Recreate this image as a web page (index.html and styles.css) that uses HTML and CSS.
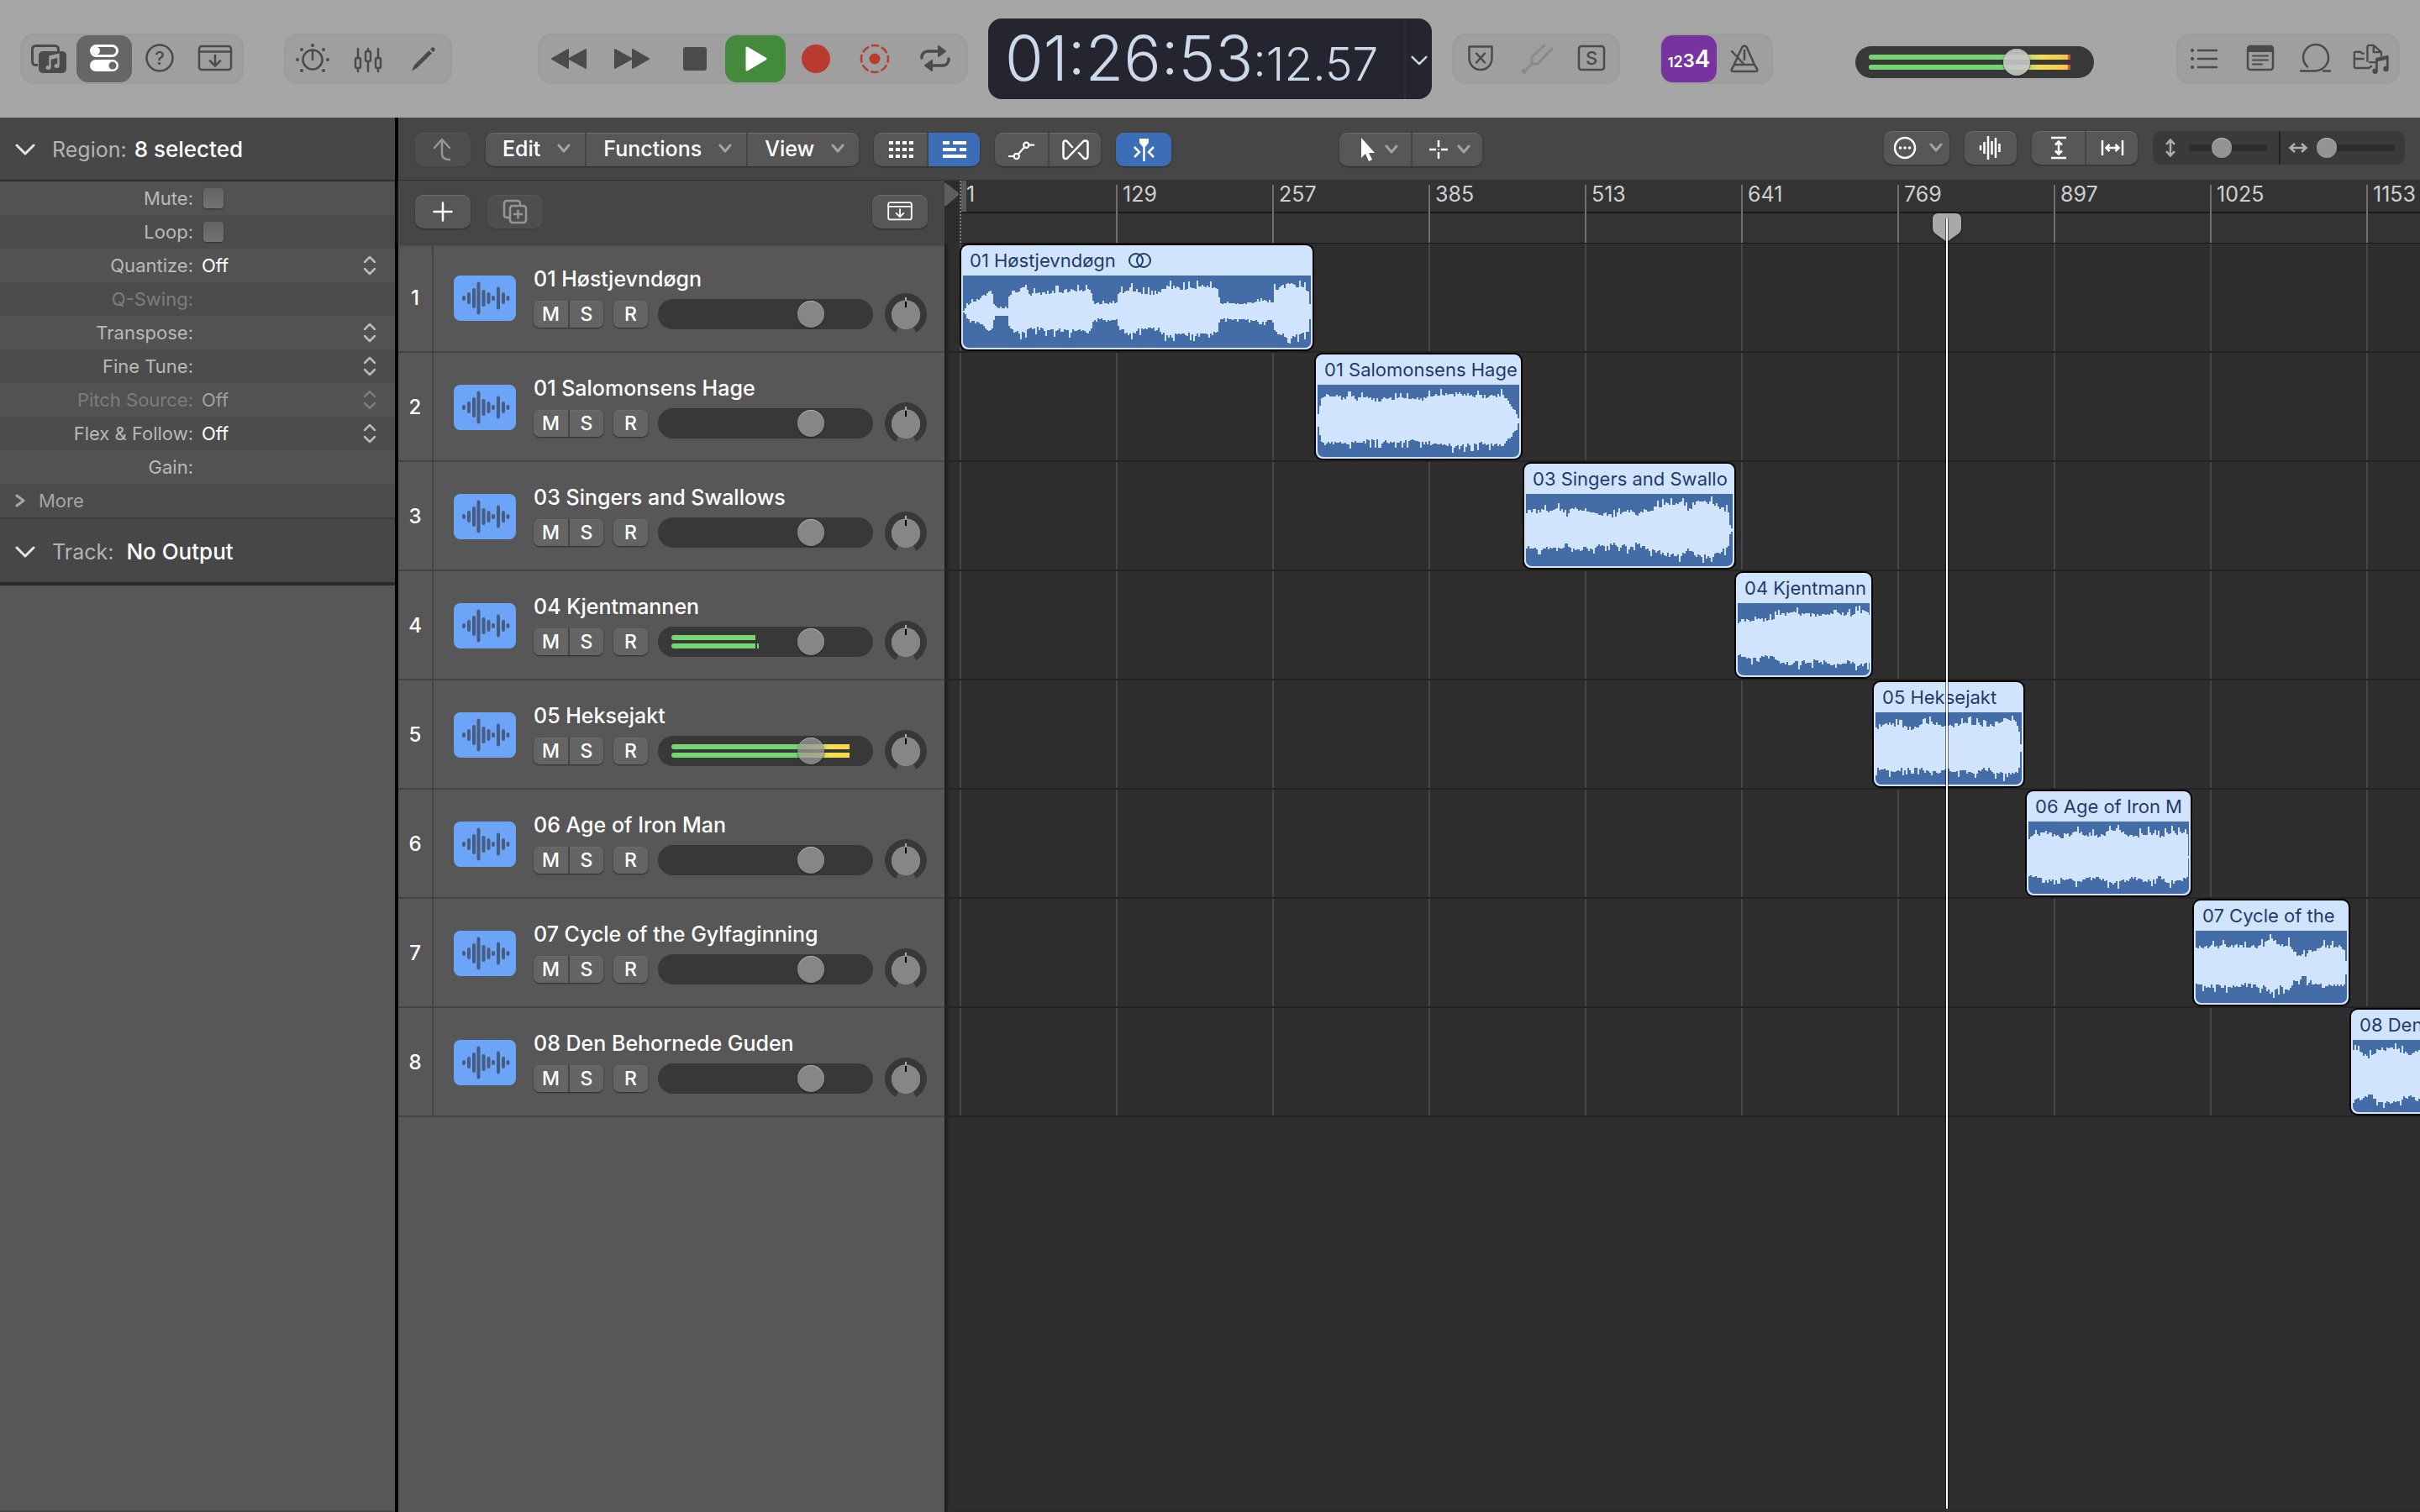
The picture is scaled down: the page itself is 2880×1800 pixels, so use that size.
FILE: index.html
```html
<!DOCTYPE html>
<html lang="en">
<head>
  <meta charset="UTF-8">
  <title>Tracks</title>
  <link rel="stylesheet" href="styles.css">
</head>
<body>
  <!-- Shared icons -->
  <svg class="sprite" aria-hidden="true">
    <symbol id="chevron" viewBox="0 0 16 12"><path d="M2 2l6 7 6-7" fill="none" stroke="currentColor" stroke-width="3" stroke-linecap="round" stroke-linejoin="round"/></symbol>
    <symbol id="disclosure" viewBox="0 0 24 14"><path d="M2 2l10 10L22 2" fill="none" stroke="currentColor" stroke-width="3" stroke-linecap="round" stroke-linejoin="round"/></symbol>
    <symbol id="tray" viewBox="0 0 44 44">
      <g fill="none" stroke="currentColor" stroke-width="2.5" stroke-linecap="round" stroke-linejoin="round">
        <rect x="3" y="7" width="38" height="28" rx="3"/><path d="M3 13.5h38M22 18v12M16 24.500l6 6 6-6"/>
      </g>
    </symbol>
    <symbol id="wave" viewBox="0 0 74 54">
      <path d="M12 26v2M18 22v10M24 17v20M29.500 9.500v35M35.500 19v16M41.500 22v10M47 26v2M53 15.500v23M59 22v10M64.500 26v2" stroke="currentColor" stroke-width="4" stroke-linecap="round"/>
    </symbol>
    <symbol id="stepper" viewBox="0 0 16 24"><path d="M2 8l6-6 6 6M2 16l6 6 6-6" fill="none" stroke="currentColor" stroke-width="2.500" stroke-linecap="round" stroke-linejoin="round"/></symbol>
  </svg>

  <!-- Control bar -->
  <header class="control-bar">
    <div class="group">
      <button aria-label="Library"><svg viewBox="0 0 44 44">
        <path d="M9 29.500H6.500a4 4 0 0 1-4-4V10.500a4 4 0 0 1 4-4h23a4 4 0 0 1 4 4V13" fill="none" stroke="currentColor" stroke-width="3"/>
        <rect x="10" y="13" width="33" height="26" rx="5" fill="currentColor"/>
        <path d="M23.500 32V19.500l10-2.500v13" fill="none" stroke="#a0a0a0" stroke-width="2.500"/><path d="M23.500 21.500l10-2.500" stroke="#a0a0a0" stroke-width="3"/>
        <ellipse cx="21.500" cy="32.500" rx="3" ry="2.500" fill="#a0a0a0"/><ellipse cx="31.500" cy="30.500" rx="3" ry="2.500" fill="#a0a0a0"/>
      </svg></button>
      <button class="on" aria-label="Inspector"><svg viewBox="0 0 44 44">
        <rect x="6.500" y="6.500" width="31" height="12" rx="6" fill="none" stroke="currentColor" stroke-width="3"/><circle cx="12.500" cy="12.500" r="4.500" fill="currentColor"/>
        <rect x="5" y="23" width="34" height="14" rx="7" fill="currentColor"/><circle cx="32" cy="30" r="4.500" fill="#666"/>
      </svg></button>
      <button aria-label="Quick help"><svg viewBox="0 0 44 44"><circle cx="22" cy="21" r="15.500" fill="none" stroke="currentColor" stroke-width="2.500"/><text class="glyph" x="22" y="29">?</text></svg></button>
      <button aria-label="Toolbar"><svg><use href="#tray"/></svg></button>
    </div>
    <div class="group">
      <button aria-label="Smart controls"><svg viewBox="0 0 44 44">
        <circle cx="22" cy="23" r="11.500" fill="none" stroke="currentColor" stroke-width="2.500"/><path d="M22 12v12" stroke="currentColor" stroke-width="2.500"/>
        <g fill="currentColor"><circle cx="22" cy="6" r="2"/><circle cx="9" cy="11" r="2"/><circle cx="35" cy="11" r="2"/><circle cx="4" cy="23" r="2"/><circle cx="40" cy="23" r="2"/><circle cx="9" cy="36" r="2"/><circle cx="35" cy="36" r="2"/></g>
      </svg></button>
      <button aria-label="Mixer"><svg viewBox="0 0 44 44"><g fill="none" stroke="currentColor" stroke-width="2.500" stroke-linecap="round">
        <path d="M10 10v11M10 33v4M22 10v3M22 25v12M34 10v11M34 33v4"/><rect x="7" y="21" width="6" height="12" rx="2"/><rect x="19" y="13" width="6" height="12" rx="2"/><rect x="31" y="21" width="6" height="12" rx="2"/>
      </g></svg></button>
      <button aria-label="Editors"><svg viewBox="0 0 44 44"><path d="M8 36.500l3-7L28.500 12l3.500 3.500L14 33zM30 10.500l1.500-1.500c2-2 5.500 1 3.500 3.500L33.500 14z" fill="currentColor"/></svg></button>
    </div>
    <div class="group transport">
      <button aria-label="Rewind"><svg viewBox="0 0 48 44"><path d="M23 10v24L2 22zM46 10v24L24 22z" fill="currentColor" stroke="currentColor" stroke-width="2" stroke-linejoin="round"/></svg></button>
      <button class="forward" aria-label="Forward"><svg viewBox="0 0 48 44"><path d="M2 10v24l22-12zM25 10v24l21-12z" fill="currentColor" stroke="currentColor" stroke-width="2" stroke-linejoin="round"/></svg></button>
      <button aria-label="Stop"><svg viewBox="0 0 44 44"><rect x="8" y="8" width="28" height="28" rx="3" fill="currentColor"/></svg></button>
      <button class="play" aria-label="Play"><svg viewBox="0 0 44 44"><path d="M12 9v26l22-13z" fill="currentColor" stroke="currentColor" stroke-width="3" stroke-linejoin="round"/></svg></button>
      <button class="rec" aria-label="Record"><svg viewBox="0 0 44 44"><circle cx="22" cy="22" r="17" fill="currentColor"/></svg></button>
      <button class="rec" aria-label="Capture recording"><svg viewBox="0 0 44 44"><circle cx="20" cy="22" r="16" fill="none" stroke="currentColor" stroke-width="2.500" stroke-dasharray="9.570 3" stroke-dashoffset="4.800"/><circle cx="20" cy="22" r="6.500" fill="currentColor"/></svg></button>
      <button aria-label="Cycle"><svg viewBox="0 0 44 44"><path d="M4 21v-1a7 7 0 0 1 7-7h16M36 22v1a7 7 0 0 1-7 7H15" fill="none" stroke="currentColor" stroke-width="3.500" stroke-linecap="round"/><path d="M24 7l8 6-8 6zM16 24l-8 6 8 6z" fill="currentColor" stroke="currentColor" stroke-width="2" stroke-linejoin="round"/></svg></button>
    </div>
    <div class="lcd">
      <div class="time">01:26:53<small>:12.57</small></div>
      <button aria-label="Display mode"><svg class="lcd-chevron"><use href="#disclosure"/></svg></button>
    </div>
    <div class="group">
      <button aria-label="Replace"><svg viewBox="0 0 44 44"><path d="M8.500 7.500h27v14a13.500 13.500 0 0 1-27 0z" fill="none" stroke="currentColor" stroke-width="2.500" stroke-linejoin="round"/><path d="M17 15.500l10 11M27 15.500l-10 11" stroke="currentColor" stroke-width="2.500" stroke-linecap="round"/></svg></button>
      <button class="dim" aria-label="Tuner"><svg viewBox="0 0 44 44"><path d="M8 37l9-9v-8L32 6M17 28h7l17-18" fill="none" stroke="currentColor" stroke-width="3" stroke-linecap="round" stroke-linejoin="round"/><circle cx="8" cy="37" r="3" fill="currentColor"/></svg></button>
      <button aria-label="Solo"><svg viewBox="0 0 44 44"><rect x="7" y="7" width="30" height="28" rx="3" fill="none" stroke="currentColor" stroke-width="2.500"/><text class="glyph" x="22" y="29">S</text></svg></button>
    </div>
    <div class="group">
      <button class="count" aria-label="Count in"><span class="c1">1</span><span class="c2">2</span><span class="c3">3</span><span class="c4">4</span></button>
      <button aria-label="Metronome"><svg viewBox="0 0 44 44"><g fill="none" stroke="currentColor" stroke-width="2.500" stroke-linecap="round" stroke-linejoin="round"><path d="M14 19l5-10c1-3 5-3 6 0l9 20 3 5c1 2 0 3-2 3H9c-2 0-3-1-2-3l3-5h22M22 12v11M7 13l14 15M13 22l-3 6"/></g></svg></button>
    </div>
    <div class="fader master">
      <i class="meter" style="width: 240px"></i><i class="meter" style="width: 240px"></i>
      <input type="range" min="0" max="100" value="70" aria-label="Master volume">
    </div>
    <div class="group views">
      <button aria-label="List editors"><svg viewBox="0 0 44 44"><path d="M14 12h22M14 22h22M14 32h22" stroke="currentColor" stroke-width="2.500" stroke-linecap="round"/><path d="M7 12h.1M7 22h.1M7 32h.1" stroke="currentColor" stroke-width="4" stroke-linecap="round"/></svg></button>
      <button aria-label="Note pads"><svg viewBox="0 0 44 44"><rect x="7" y="7" width="30" height="28" rx="3" fill="none" stroke="currentColor" stroke-width="2.500"/><path d="M7 7h30v7H7z" fill="currentColor"/><path d="M13 18.500h18M13 23.500h18M13 28.500h11" stroke="currentColor" stroke-width="2" stroke-linecap="round"/></svg></button>
      <button aria-label="Loops"><svg viewBox="0 0 44 44"><path d="M4 36.500h15c11 0 18-7 18-16a15 15.500 0 1 0-30 0c0 5 2 8 5 11M31 36.500h8" fill="none" stroke="currentColor" stroke-width="2.500" stroke-linecap="round"/></svg></button>
      <button aria-label="Browsers"><svg viewBox="0 0 48 44"><g fill="none" stroke="currentColor" stroke-width="2.500" stroke-linejoin="round"><path d="M15 15h-3l-2-2H3.500a1.500 1.500 0 0 0-1.500 1.500V32c0 1 1 2 2 2h17l4-3M2 22h13M19 26V7c0-1.500 1-2.500 2.500-2.500H27l10 9V19M27 5v8.500h9M32 26.500h-11"/><path d="M31 38V22l14-3v16" stroke-width="3"/><path d="M31 23.500l14-3" stroke-width="4"/></g><circle cx="29" cy="38" r="3.500" fill="currentColor"/><circle cx="43" cy="35" r="3.500" fill="currentColor"/></svg></button>
    </div>
  </header>

  <div class="workspace">
    <!-- Inspector -->
    <aside class="inspector">
      <h2><svg><use href="#disclosure"/></svg>Region: <b>8 selected</b></h2>
      <div class="params">
        <div class="param"><label for="mute">Mute:</label><input type="checkbox" id="mute"></div>
        <div class="param"><label for="loop">Loop:</label><input type="checkbox" id="loop"></div>
        <div class="param"><label for="quantize">Quantize:</label><select id="quantize"><option>Off</option></select><svg><use href="#stepper"/></svg></div>
        <div class="param off"><label for="swing">Q-Swing:</label><input type="text" id="swing" disabled></div>
        <div class="param"><label for="transpose">Transpose:</label><select id="transpose"><option></option></select><svg><use href="#stepper"/></svg></div>
        <div class="param"><label for="fine">Fine Tune:</label><select id="fine"><option></option></select><svg><use href="#stepper"/></svg></div>
        <div class="param off"><label for="pitch">Pitch Source:</label><select id="pitch" disabled><option>Off</option></select><svg><use href="#stepper"/></svg></div>
        <div class="param"><label for="flex">Flex &amp; Follow:</label><select id="flex"><option>Off</option></select><svg><use href="#stepper"/></svg></div>
        <div class="param"><label for="gain">Gain:</label><input type="text" id="gain"></div>
        <button class="more"><svg viewBox="0 0 12 16"><path d="M2 2l8 6-8 6" fill="none" stroke="currentColor" stroke-width="3" stroke-linecap="round" stroke-linejoin="round"/></svg>More</button>
      </div>
      <h2 class="track-title"><svg><use href="#disclosure"/></svg>Track: <b>No Output</b></h2>
    </aside>

    <main class="tracks-area">
      <div class="menu-bar">
        <div class="pill faint"><button aria-label="Up"><svg viewBox="0 0 32 32"><path d="M6 14L15 4l9 10M15 5v16c0 5 3 7 9 7" fill="none" stroke="currentColor" stroke-width="2.500" stroke-linecap="round" stroke-linejoin="round"/></svg></button></div>
        <div class="pill menus">
          <button>Edit<svg><use href="#chevron"/></svg></button>
          <button>Functions<svg><use href="#chevron"/></svg></button>
          <button>View<svg><use href="#chevron"/></svg></button>
        </div>
        <div class="pill">
          <button aria-label="Grid"><svg viewBox="0 0 32 32"><path d="M2 8h29M2 16h29M2 24h29" stroke="currentColor" stroke-width="4" stroke-dasharray="5 3"/></svg></button>
          <button class="active" aria-label="Tracks"><svg viewBox="0 0 32 32"><path d="M2 8h8M14 8h16M2 16h16M22 16h8M2 24h28" stroke="currentColor" stroke-width="4"/></svg></button>
        </div>
        <div class="pill">
          <button aria-label="Automation"><svg viewBox="0 0 36 32"><g fill="none" stroke="currentColor" stroke-width="2.500" stroke-linecap="round"><circle cx="11" cy="25" r="3.500"/><circle cx="24" cy="10" r="3.500"/><path d="M1 25h6M13.500 22L21.500 13M28 10h6"/></g></svg></button>
          <button aria-label="Flex"><svg viewBox="0 0 32 32"><path d="M12 13L6 6.500C4 4.500 1.500 5.500 1.500 8v16c0 3 3 4 5 2L25 6.500c2-2 5.500-1 5.500 1.500v16c0 3-3 4-5 2L20 20" fill="none" stroke="currentColor" stroke-width="2.500" stroke-linecap="round"/></svg></button>
        </div>
        <div class="pill"><button class="active" aria-label="Catch playhead"><svg viewBox="0 0 32 32"><path d="M11 3h11v5l-4 5h-3l-4-5z" fill="currentColor"/><path d="M16.500 8v22M5 13l6 6-6 6M28 13l-6 6 6 6" fill="none" stroke="currentColor" stroke-width="2.500"/></svg></button></div>
        <div class="pill tools">
          <button aria-label="Pointer tool"><svg class="tool" viewBox="0 0 32 32"><path d="M10 2v24l5-5 4 9 4-2-4-8h7z" fill="currentColor"/></svg><svg><use href="#chevron"/></svg></button>
          <button aria-label="Marquee tool"><svg class="tool" viewBox="0 0 32 32"><path d="M16 5v8M16 19v8M5 16h8M19 16h8M16 15.500v1" stroke="currentColor" stroke-width="2.500"/></svg><svg><use href="#chevron"/></svg></button>
        </div>
        <div class="zoom-tools">
          <div class="pill options"><button aria-label="Options"><svg class="tool" viewBox="0 0 32 32"><circle cx="16" cy="16" r="12" fill="none" stroke="currentColor" stroke-width="2.500"/><path d="M10.500 16h.1M16 16h.1M21.500 16h.1" stroke="currentColor" stroke-width="3.500" stroke-linecap="round"/></svg><svg><use href="#chevron"/></svg></button></div>
          <div class="pill"><button aria-label="Waveform zoom"><svg viewBox="0 0 32 32"><path d="M4 13v6M8.500 9v14M13 2v28M17.500 8v16M22 4v24M26.500 11v10" stroke="currentColor" stroke-width="2.500"/></svg></button></div>
          <div class="pill">
            <button aria-label="Fit height"><svg viewBox="0 0 32 32"><path d="M7 4h18M7 28h18M16 9v14M12 12.500l4-4 4 4M12 19.500l4 4 4-4" fill="none" stroke="currentColor" stroke-width="2.500"/></svg></button>
            <button aria-label="Fit width"><svg viewBox="0 0 32 32"><path d="M4 7v18M28 7v18M9 16h14M12.500 12l-4 4 4 4M19.500 12l4 4-4 4" fill="none" stroke="currentColor" stroke-width="2.500"/></svg></button>
          </div>
          <div class="zoom-sliders">
            <label><svg viewBox="0 0 24 24"><path d="M12 3v18M7 8l5-5.500L17 8M7 16l5 5.500 5-5.500" fill="none" stroke="currentColor" stroke-width="2.500"/></svg><input type="range" min="0" max="100" value="39" aria-label="Vertical zoom"></label>
            <label><svg viewBox="0 0 24 24"><path d="M3 12h18M8 7l-5.500 5L8 17M16 7l5.500 5-5.500 5" fill="none" stroke="currentColor" stroke-width="2.500"/></svg><input type="range" min="0" max="100" value="0" aria-label="Horizontal zoom"></label>
          </div>
        </div>
      </div>

      <div class="arrange">
        <section class="headers">
          <div class="header-bar">
            <div class="pill"><button aria-label="Add track"><svg viewBox="0 0 32 32"><path d="M16 5.500v21M5.500 16h21" stroke="currentColor" stroke-width="2.500" stroke-linecap="round"/></svg></button></div>
            <div class="pill faint"><button aria-label="Duplicate track"><svg viewBox="0 0 32 32"><path d="M9 23H6a3 3 0 0 1-3-3V6a3 3 0 0 1 3-3h13a3 3 0 0 1 3 3v2" fill="none" stroke="currentColor" stroke-width="2.500"/><rect x="10" y="9" width="19" height="20" rx="3" fill="none" stroke="currentColor" stroke-width="2.500"/><path d="M19.500 13.500v11M14 19h11" stroke="currentColor" stroke-width="2.500"/></svg></button></div>
            <div class="pill header-config"><button aria-label="Track header settings"><svg><use href="#tray"/></svg></button></div>
          </div>
          <div id="trackList"></div>
        </section>

        <section class="timeline">
          <div class="ruler">
            <svg class="start" viewBox="0 0 26 75"><path d="M0 0h18v75H0z" fill="#2c2c2c"/><path d="M0 3h2l14 11q2 2 0 4L2 30H0z" fill="#5e5e5e"/><path d="M20 0h6v37h-6z" fill="#5a5a5a"/><path d="M19 0v75" stroke="#7c7c7c" stroke-width="2" stroke-dasharray="2 2"/></svg>
            <div class="ticks" id="ticks"></div>
          </div>
          <div class="lanes" id="lanes"></div>
          <div class="playhead"><svg viewBox="0 0 34 34"><path d="M0 6a6 6 0 0 1 6-6h22a6 6 0 0 1 6 6v11c0 3-1 5-3 7L17 34 3 24c-2-2-3-4-3-7z" fill="#a9a9a9"/></svg></div>
        </section>
      </div>
    </main>
  </div>

  <script src="script.js"></script>
</body>
</html>
```
FILE: styles.css
```css
/* Global Settings */
* { margin: 0; padding: 0; box-sizing: border-box; }
body {
  display: flex;
  flex-direction: column;
  min-height: 100vh;
  background: #2e2e2e;
  font-family: Inter, "Liberation Sans", sans-serif;
  font-size: 24px;
  color: #fff;
  overflow: hidden;
}
button, input, select {
  font: inherit;
  color: inherit;
  background: none;
  border: none;
  appearance: none;
}
button { cursor: pointer; }
.sprite { display: none; }

/* ----------------- Control bar ----------------- */
.control-bar {
  display: flex;
  align-items: center;
  height: 140px;
  padding: 0 24px;
  background: #a6a6a6;
  color: #4b4b4b;
}
.group {
  display: flex;
  align-items: center;
  height: 60px;
  padding: 0 1px;
  margin-right: 48px;
  border-radius: 16px;
  background: #9f9f9f;
  box-shadow: inset 0 0 4px #999;
}
.group button {
  display: flex;
  align-items: center;
  justify-content: center;
  width: 66px;
  height: 56px;
  border-radius: 14px;
}
.group svg { width: 44px; height: 44px; }
.glyph {
  font-size: 22px;
  font-weight: 500;
  text-anchor: middle;
  fill: currentColor;
}
.group .on { background: #666; color: #fff; }
.group .dim { color: #8a8a8a; }
.transport { margin: 0 24px 0 54px; }
.transport button { width: 72px; }
.transport .forward { width: 78px; }
.transport .play { background: #438a3c; color: #fff; }
.transport .rec { color: #b93a2f; }
.group .count {
  align-items: baseline;
  width: 66px;
  line-height: 56px;
  background: #77349f;
  color: #fff;
  font-weight: 600;
}
.c1 { font-size: 16px; }
.c2 { font-size: 18px; }
.c3 { font-size: 22px; }
.c4 { font-size: 28px; }
.views { margin: 0 0 0 auto; }

/* Time display */
.lcd {
  display: flex;
  width: 528px;
  height: 96px;
  margin-right: 24px;
  border-radius: 16px;
  background: #24252e;
  color: #cbd9ea;
}
.time {
  flex: 1;
  padding-left: 20px;
  font-size: 74px;
  font-weight: 300;
  line-height: 94px;
  white-space: nowrap;
}
.time small { font-size: 55px; }
.lcd button {
  width: 33px;
  border-left: 2px solid #2e2f39;
}
.lcd-chevron { width: 20px; height: 14px; }

/* ----------------- Faders ----------------- */
.fader {
  position: relative;
  display: flex;
  flex-direction: column;
  justify-content: center;
  gap: 4px;
  width: 256px;
  height: 36px;
  padding-left: 16px;
  border-radius: 18px;
  background: #383838;
}
.meter {
  height: 6px;
  border-radius: 3px 0 0 3px;
  background: linear-gradient(90deg, #76d672 150px, #fade4e 190px, #f6c944 240px);
}
.fader input {
  position: absolute;
  inset: 0;
  width: 100%;
}
.fader input::-webkit-slider-thumb {
  appearance: none;
  width: 32px;
  height: 32px;
  border-radius: 50%;
  background: #868686;
  box-shadow: inset 0 1px 0 #a8a8a8, 0 1px 2px #222;
}
.fader.live input::-webkit-slider-thumb { background: rgba(155, 155, 155, 0.75); }
.fader .peak {
  position: absolute;
  left: 118px;
  top: 20px;
  width: 2px;
  height: 6px;
  background: #76d672;
}
.master {
  gap: 6px;
  width: 284px;
  height: 38px;
  margin: 8px 0 0 50px;
  border-radius: 19px;
}
.master .meter {
  background: linear-gradient(90deg, #76d672 170px, #f4de54 205px, #f6c444 237px, #d9513b 237px);
}
.master input::-webkit-slider-thumb { background: rgba(200, 200, 200, 0.9); }

/* ----------------- Workspace ----------------- */
.workspace {
  flex: 1;
  display: grid;
  grid-template-columns: 474px 1fr;
}
.inspector {
  border-right: 4px solid #000;
  background: linear-gradient(#484848, #484848) bottom / 100% 2px no-repeat #575757;
}
.inspector h2 {
  display: flex;
  align-items: center;
  height: 76px;
  padding: 2px 0 0 18px;
  border-bottom: 2px solid #2e2e2e;
  background: #474747;
  color: #b4b4b4;
  font-size: 25px;
  font-weight: 400;
  line-height: 30px;
}
.inspector h2 svg {
  width: 24px;
  height: 14px;
  margin-right: 20px;
  color: #e4e4e4;
}
.inspector h2 b {
  margin-left: 9px;
  color: #fff;
  font-size: 26px;
  font-weight: 500;
}
.inspector .track-title {
  height: 81px;
  border-top: 2px solid #3a3a3a;
  border-bottom: 4px solid #2a2a2a;
}
.track-title b { padding-left: 6px; }

.params {
  display: grid;
  grid-auto-rows: 40px;
  font-size: 22px;
}
.param, .more {
  display: flex;
  align-items: center;
  gap: 10px;
  padding-right: 22px;
  background: #525252;
  color: #b9b9b9;
  line-height: 30px;
}
.param:nth-child(even), .more { background: #4c4c4c; }
.param label {
  width: 230px;
  text-align: right;
}
.param select {
  flex: 1;
  color: #fff;
  opacity: 1;
}
.param input[type="text"] { width: 160px; }
.param input[type="checkbox"] {
  width: 24px;
  height: 24px;
  margin-left: 2px;
  border-radius: 4px;
  background: linear-gradient(#646464, #727272);
  box-shadow: 0 1px 2px #333;
}
.param svg { width: 16px; height: 24px; }
.param.off, .param.off svg { color: #7d7d7d; }
.param.off select { color: #a0a0a0; }
.more {
  gap: 16px;
  padding-left: 18px;
  color: #a6a6a6;
}
.more svg { width: 12px; height: 16px; }

/* ----------------- Menu bar ----------------- */
.tracks-area {
  display: flex;
  flex-direction: column;
  min-width: 0;
}
.menu-bar {
  display: flex;
  gap: 18px;
  height: 75px;
  padding: 18px 18px 0 20px;
  border-bottom: 1px solid #333;
  background: #464646;
}
.pill {
  display: flex;
  height: 40px;
  border-radius: 10px;
  background: #575757;
  box-shadow: 0 1px 2px #2c2c2c, inset 0 1px 0 #6c6c6c;
  overflow: hidden;
}
.pill button {
  display: flex;
  align-items: center;
  justify-content: center;
  width: 66px;
}
.pill button + button { border-left: 2px solid #454545; }
.pill button:not(:only-child) { width: 63px; }
.pill svg { width: 32px; height: 32px; }
.pill .active { background: #3c6db7; }
.pill.faint {
  background: #4e4e4e;
  box-shadow: 0 1px 1px #3e3e3e, inset 0 1px 0 #585858;
  color: #969696;
}
.menus { font-size: 25px; font-weight: 500; }
.pill.menus button {
  justify-content: space-between;
  width: auto;
  padding: 0 17px 2px 20px;
  gap: 20px;
}
.menus svg, .tools .tool + svg, .options .tool + svg {
  width: 16px;
  height: 12px;
  color: #a3a3a3;
}
.tools { margin-left: 182px; }
.pill.tools button { width: 85px; gap: 6px; }
.pill.options button { width: 78px; gap: 13px; }
.zoom-tools {
  display: flex;
  gap: 18px;
  margin: -2px 0 0 auto;
}
.zoom-tools .pill button:only-child:not(.options button) { width: 62px; }
.zoom-sliders {
  display: flex;
  height: 40px;
  border-radius: 10px;
  background: #3a3a3a;
}
.zoom-sliders label {
  display: flex;
  align-items: center;
  gap: 10px;
  width: 150px;
  padding-left: 9px;
  color: #b0b0b0;
}
.zoom-sliders label + label { border-left: 2px solid #222; }
.zoom-sliders svg { width: 24px; height: 24px; }
.zoom-sliders input {
  width: 93px;
  height: 8px;
  border-radius: 4px;
  background: #2c2c2c;
}
.zoom-sliders input::-webkit-slider-thumb {
  appearance: none;
  width: 24px;
  height: 24px;
  border-radius: 50%;
  background: #949494;
  box-shadow: inset 0 1px 0 #b4b4b4;
}

/* ----------------- Track headers ----------------- */
.arrange {
  flex: 1;
  display: grid;
  grid-template-columns: 650px 1fr;
}
.headers {
  background: #575757;
}
.header-bar {
  display: flex;
  gap: 20px;
  height: 75px;
  padding: 17px 20px 0;
  background: #464646;
  box-shadow: 0 1px 4px #333;
}
.header-config { margin-left: auto; }
.track {
  display: flex;
  align-items: center;
  height: 130px;
  border-bottom: 2px solid #444;
}
.number {
  align-self: stretch;
  width: 42px;
  border-right: 2px solid #464646;
  font-weight: 500;
  line-height: 130px;
  text-align: center;
}
.track-icon {
  width: 74px;
  height: 54px;
  margin: 2px 21px 0 24px;
  border-radius: 8px;
  background: #6ca4f8;
  color: #465c80;
}
.track-name {
  margin-bottom: 9px;
  font-size: 25px;
  font-weight: 500;
  line-height: 30px;
}
.strip {
  display: flex;
  align-items: center;
  height: 36px;
}
.strip .pill {
  height: 32px;
  margin-right: 12px;
  border-radius: 7px;
  background: #646464;
  font-size: 23px;
  font-weight: 500;
}
.strip .pill button { width: 41px; }
.strip .pill button + button { width: 42px; }
.knob { width: 50px; height: 50px; margin-left: 14px; }

/* ----------------- Timeline ----------------- */
.timeline {
  position: relative;
  min-width: 0;
  background: #2e2e2e;
  box-shadow: inset 4px 0 3px -1px #1c1c1c;
  overflow: hidden;
}
.ruler {
  position: relative;
  height: 75px;
  border-bottom: 1px solid #1c1c1c;
  background: linear-gradient(#333 37px, #1c1c1c 37px, #1c1c1c 39px, #333 39px);
}
.start {
  position: absolute;
  left: 0;
  top: 0;
  width: 26px;
  height: 75px;
}
.ticks {
  display: flex;
  height: 100%;
  padding: 5px 0 0 18px;
}
.ticks span {
  flex: none;
  width: 186px;
  padding-left: 6px;
  border-left: 2px solid #6f6f6f;
  color: #cfcfcf;
  font-size: 25px;
  line-height: 23px;
}
.ticks span:first-child { border-color: transparent; }
.lanes { background: repeating-linear-gradient(90deg, #464646 0 2px, transparent 2px 186px) 18px 0 no-repeat; }
.lane {
  height: 130px;
  padding-left: 18px;
  border-bottom: 2px solid #232323;
}
.region {
  height: 128px;
  padding: 0 2px 2px;
  border: 2px solid #000;
  border-radius: 10px;
  background: #d1e4fe;
  color: #1f3c6b;
  overflow: hidden;
}
.region h3 {
  display: flex;
  align-items: center;
  gap: 14px;
  height: 36px;
  padding-left: 8px;
  font-size: 22px;
  font-weight: 400;
  white-space: nowrap;
}
.region h3 svg { flex: none; width: 30px; height: 20px; }
.audio {
  display: block;
  width: 100%;
  height: 86px;
  border-radius: 0 0 7px 7px;
  background: #446ca6;
}

.playhead {
  position: absolute;
  left: 1176px;
  top: 39px;
  bottom: 4px;
  width: 34px;
}
.playhead svg { width: 34px; height: 34px; filter: drop-shadow(0 0 1px #000); }
.playhead::after {
  content: "";
  position: absolute;
  left: 15px;
  top: 6px;
  bottom: 0;
  box-sizing: border-box;
  width: 4px;
  border: 1px solid rgba(0, 0, 0, 0.5);
  border-width: 0 1px;
  background: #fff;
  background-clip: padding-box;
}
```
FILE: script.js
```javascript
/* ---------- Session data ---------- */
// start and length in pixels from bar 1; wave is a list of [position %, peak height]
const tracks = [
  { name: '01 Høstjevndøgn', clip: '01 Høstjevndøgn', start: 0, length: 422, stereo: true,
    wave: [[0,2],[1,8],[3,15],[6,19],[7.5,25],[8.5,20],[8.8,5],[12.7,6],[13.2,23],[17,29],[19.5,21],[24,24],[29,26],[36.5,26],[37.4,10],[44,11],[44.6,23],[48,29],[51,23],[56,24],[58.5,32],[63,29],[70,32],[73.2,27],[73.6,10],[81,10],[86.5,14],[88.7,10],[89.4,28],[94,34],[99.3,27],[99.6,4],[100,2]] },
  { name: '01 Salomonsens Hage', clip: '01 Salomonsens Hage', start: 422, length: 248,
    wave: [[0,9],[1,24],[4,31],[12,29],[30,27],[50,27],[58,31],[70,34],[80,30],[92,32],[95,23],[98,12],[99,3],[100,1]] },
  { name: '03 Singers and Swallows', clip: '03 Singers and Swallo', start: 670, length: 254,
    wave: [[0,23],[8,24],[17,26],[19,16],[22,26],[30,25],[42,18],[50,24],[53,17],[58,25],[66,31],[75,34],[78,25],[82,35],[90,34],[96,25],[98,22],[98.5,2],[100,1]] },
  { name: '04 Kjentmannen', clip: '04 Kjentmann', start: 922, length: 165, level: 100, peak: true,
    wave: [[0,22],[8,24],[15,28],[22,22],[32,30],[42,32],[60,29],[74,34],[84,30],[94,35],[100,30]] },
  { name: '05 Heksejakt', clip: '05 Heksejakt', start: 1086, length: 182, level: 212,
    wave: [[0,27],[10,30],[26,25],[38,33],[48,28],[66,32],[75,27],[88,35],[96,32],[97.5,28],[98.5,5],[100,4]] },
  { name: '06 Age of Iron Man', clip: '06 Age of Iron M', start: 1268, length: 199,
    wave: [[0,24],[10,31],[18,26],[30,31],[42,27],[54,34],[65,27],[75,31],[80,25],[88,32],[98.5,28],[99,2],[100,1]] },
  { name: '07 Cycle of the Gylfaginning', clip: '07 Cycle of the', start: 1467, length: 188,
    wave: [[0,24],[10,25],[28,27],[32,24],[44,27],[50,34],[56,26],[61,29],[65,18],[71,14],[77,22],[85,26],[98.5,24],[99,2],[100,1]] },
  { name: '08 Den Behornede Guden', clip: '08 Den Behornede', start: 1654, length: 200,
    wave: [[0,32],[6,28],[10,24],[16,33],[24,35],[34,27],[42,34],[60,32],[100,30]] }
];

/* ---------- Waveforms ---------- */
function peakAt(wave, pos) {
  for (let i = 1; i < wave.length; i++) {
    const [x0, y0] = wave[i - 1];
    const [x1, y1] = wave[i];
    if (pos <= x1) return y0 + (y1 - y0) * (pos - x0) / (x1 - x0);
  }
  return 1;
}

// One two-pixel column per step, with a repeatable wobble on each side
function waveform(track, seed) {
  const width = track.length - 8;
  let state = seed * 7919 + 13;
  const wobble = () => {
    state = (state * 16807) % 2147483647;
    const r = state / 2147483647;
    return r > 0.9 ? 6 : r * 6 - 4;
  };
  let d = '';
  for (let x = 0; x < width; x += 2) {
    const peak = peakAt(track.wave, x / width * 100);
    const scale = peak < 14 ? 0.4 : 1;
    const up = Math.max(1, Math.round(peak + wobble() * scale));
    const down = Math.max(1, Math.round(peak * 0.95 + wobble() * scale));
    d += `M${x} ${43 - up}h2v${up + down}h-2z`;
  }
  return `<svg class="audio" viewBox="0 0 ${width} 86" preserveAspectRatio="none" shape-rendering="crispEdges"><path d="${d}" fill="#d1e4fe"/></svg>`;
}

/* ---------- Track headers ---------- */
document.getElementById('trackList').innerHTML = tracks.map((t, i) => {
  const meter = t.level ? `<i class="meter" style="width: ${t.level}px"></i>`.repeat(2) : '';
  return `
  <div class="track">
    <div class="number">${i + 1}</div>
    <svg class="track-icon"><use href="#wave"/></svg>
    <div>
      <div class="track-name">${t.name}</div>
      <div class="strip">
        <div class="pill"><button>M</button><button>S</button></div>
        <div class="pill"><button>R</button></div>
        <div class="fader${t.level > 150 ? ' live' : ''}">${meter}${t.peak ? '<i class="peak"></i>' : ''}
          <input type="range" min="0" max="100" value="74" aria-label="${t.name} volume">
        </div>
        <svg class="knob" viewBox="0 0 50 50">
          <path d="M13 47A25 25 0 1 1 37 47L33 38H17z" fill="#383838"/>
          <path d="M25 5v5" stroke="#76d672" stroke-width="2"/>
          <circle cx="25" cy="25.500" r="17" fill="#a0a0a0"/><circle cx="25" cy="26" r="17" fill="#868686"/>
          <path d="M25 10v7" stroke="#000" stroke-width="2"/>
        </svg>
      </div>
    </div>
  </div>`;
}).join('');

/* ---------- Ruler and regions ---------- */
document.getElementById('ticks').innerHTML =
  Array.from({ length: 10 }, (_, i) => `<span>${i * 128 + 1}</span>`).join('');

const stereo = '<svg viewBox="0 0 30 20"><g fill="none" stroke="currentColor" stroke-width="2"><circle cx="10" cy="10" r="8"/><circle cx="19" cy="10" r="8"/></g></svg>';
document.getElementById('lanes').innerHTML = tracks.map((t, i) => `
  <div class="lane">
    <div class="region" style="margin-left: ${t.start}px; width: ${t.length}px">
      <h3>${t.clip}${t.stereo ? stereo : ''}</h3>
      ${waveform(t, i + 1)}
    </div>
  </div>`).join('');
```
